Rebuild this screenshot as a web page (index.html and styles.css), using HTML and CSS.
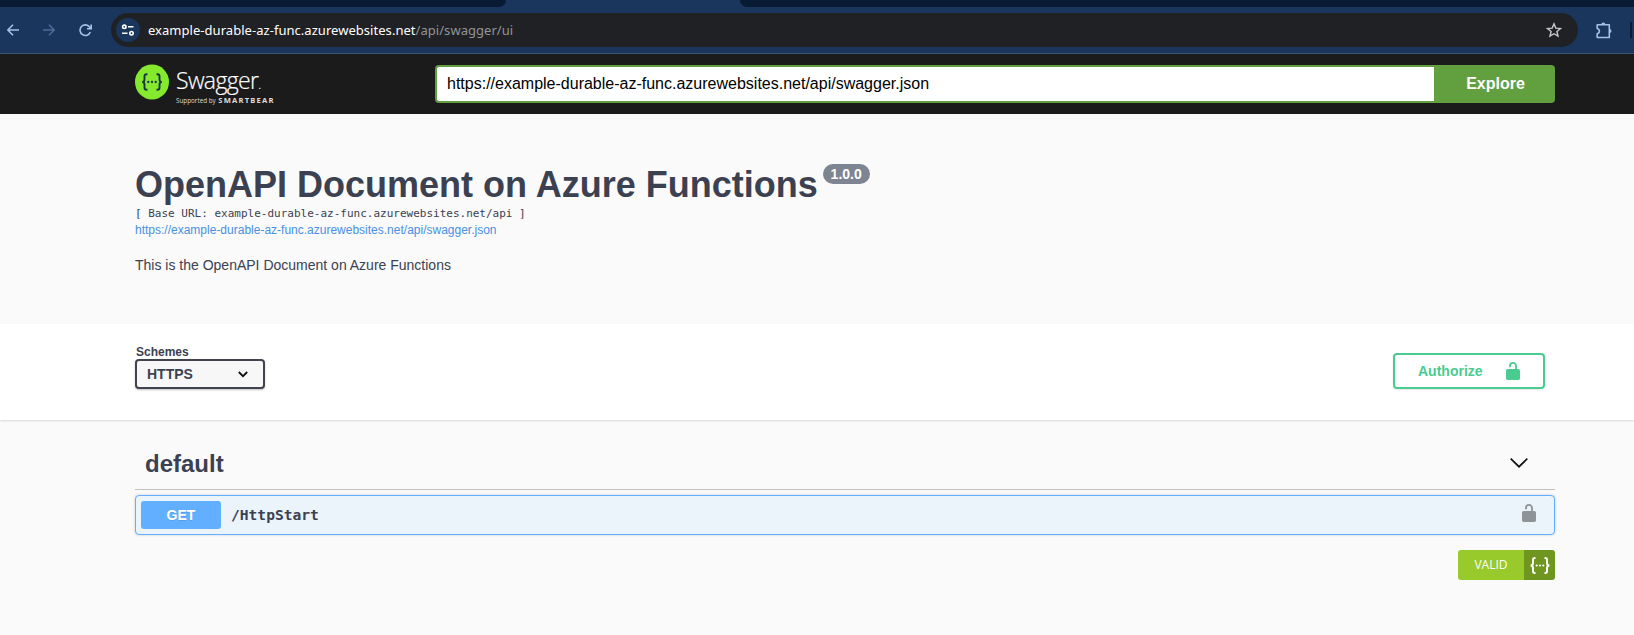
FILE: index.html
```html
<!DOCTYPE html>
<html lang="en">
<head>
<meta charset="utf-8">
<title>Swagger UI</title>
<link rel="stylesheet" href="styles.css">
</head>
<body>
<div class="tabs"><div class="tab-left"></div><div class="tab-active"></div><div class="tab-right"></div></div>
<div class="toolbar">
  <div class="nav">
    <svg width="12" height="12" viewBox="0 0 12 12" class="ico"><path d="M12 6H1M6 .7L.8 6 6 11.300"/></svg>
    <svg width="12" height="12" viewBox="0 0 12 12" class="ico dim"><path d="M0 6h11M6 .7L11.200 6 6 11.300"/></svg>
    <svg width="13" height="13" viewBox="0 0 13 13" class="ico"><path d="M11.300 8A5.300 5.300 0 1 1 10.600 3L12 4.600M12.200 .5v4.300H8"/></svg>
  </div>
  <div class="omnibox">
    <span class="site"><svg width="14" height="14" viewBox="0 0 14 14"><g fill="none" stroke="#fff" stroke-width="1.600"><circle cx="3.300" cy="3.800" r="1.700"/><path d="M7 3.800h5.500M1 10.200h5.500"/><circle cx="10.500" cy="10.200" r="1.700"/></g></svg></span>
    <span class="address">example-durable-az-func.azurewebsites.net<span class="path">/api/swagger/ui</span></span>
    <svg class="star" width="16" height="16" viewBox="0 0 16 16"><path d="M8 1.800l1.800 4.300 4.700.4-3.600 3 1.100 4.600L8 11.700l-4 2.400 1.100-4.600-3.600-3 4.700-.4z" fill="none" stroke="#c7c7c7" stroke-width="1.400"/></svg>
  </div>
  <svg class="puzzle" width="18" height="17" viewBox="0 0 18 17"><path d="M2.200 2.700H14.300V15.500H2.200V11.800Q4.400 11.200 4.400 9.100T2.200 6.400Z" fill="none" stroke="#a8bfe4" stroke-width="1.600" stroke-linejoin="round"/><path d="M6.300 2.500a2 2 0 0 1 4 0zM14.500 7a2 2 0 0 1 0 4z" fill="#a8bfe4"/></svg>
  <div class="divider"></div>
</div>
<header class="topbar">
  <div class="logo">
    <svg width="34" height="36" viewBox="0 0 34 36"><ellipse cx="17" cy="18" rx="17" ry="17.500" fill="#85ea2d"/><g fill="none" stroke="#173647" stroke-width="1.900"><path d="M12.500 10.200h-1q-2 0-2 2v3.200q0 2.400-2.200 2.600 2.200.2 2.200 2.600v3.200q0 2 2 2h1M21.500 10.200h1q2 0 2 2v3.200q0 2.400 2.200 2.600-2.200.2-2.200 2.600v3.200q0 2-2 2h-1"/></g><g fill="#173647"><circle cx="13.300" cy="18" r="1.150"/><circle cx="17" cy="18" r="1.150"/><circle cx="20.700" cy="18" r="1.150"/></g></svg>
    <div class="wordmark"><div class="name">Swagger<span class="tm">.</span></div><div class="support">Supported by <b>SMARTBEAR</b></div></div>
  </div>
  <div class="search"><div class="url">https://example-durable-az-func.azurewebsites.net/api/swagger.json</div><div class="explore">Explore</div></div>
</header>
<section class="info">
  <div class="heading"><h1>OpenAPI Document on Azure Functions</h1><span class="version">1.0.0</span></div>
  <div class="base">[ Base URL: example-durable-az-func.azurewebsites.net/api ]</div>
  <a class="link">https://example-durable-az-func.azurewebsites.net/api/swagger.json</a>
  <p class="desc">This is the OpenAPI Document on Azure Functions</p>
</section>
<section class="schemes">
  <div><div class="label">Schemes</div>
    <div class="select"><span>HTTPS</span><svg width="10" height="7" viewBox="0 0 10 7"><path d="M.8 1L5 5.200 9.200 1" fill="none" stroke="#111" stroke-width="1.800"/></svg></div></div>
  <div class="authorize"><span>Authorize</span><svg width="14" height="18" viewBox="0 0 14 18"><path d="M10 8V3.900a3 3 0 0 0-6 0v1.300" fill="none" stroke="#49cc90" stroke-width="1.800"/><rect y="7" width="14" height="11" rx="1.800" fill="#49cc90"/></svg></div>
</section>
<main class="operations">
  <div class="tag"><h2>default</h2><svg width="18" height="10" viewBox="0 0 18 10"><path d="M.7.700L9 8.700 17.300.700" fill="none" stroke="#111" stroke-width="1.700"/></svg></div>
  <div class="op"><span class="method">GET</span><span class="route">/HttpStart</span><svg width="14" height="18" viewBox="0 0 14 18"><path d="M10 8V3.900a3 3 0 0 0-6 0v1.300" fill="none" stroke="#8e9397" stroke-width="1.800"/><rect y="7" width="14" height="11" rx="1.800" fill="#8e9397"/></svg></div>
  <div class="badge"><span class="valid">VALID</span><span class="braces"><svg width="20" height="17" viewBox="0 0 20 17"><g fill="none" stroke="#fff" stroke-width="1.900"><path d="M5.500 1h-.8q-1.700 0-1.700 1.700v3.300q0 2.300-2.300 2.500 2.300.2 2.300 2.500v3.300Q3 16 4.700 16h.8M14.500 1h.8q1.700 0 1.700 1.700v3.300q0 2.300 2.300 2.500-2.300.2-2.300 2.500v3.300q0 1.700-1.700 1.700h-.8"/></g><g fill="#fff"><circle cx="6.700" cy="8.500" r="1.100"/><circle cx="10" cy="8.500" r="1.100"/><circle cx="13.300" cy="8.500" r="1.100"/></g></svg></span></div>
</main>
</body>
</html>
```
FILE: styles.css
```css
* { box-sizing: border-box; }
body { margin: 0; height: 635px; overflow: hidden; background: #fafafa; color: #3b4151; font-family: "Liberation Sans", Arial, sans-serif; }
svg { display: block; flex: none; }
h1, h2, p { margin: 0; }

.tabs { display: flex; height: 7px; background: #1a365d; }
.tab-left { width: 506px; background: #091a35; border-bottom-right-radius: 8px; }
.tab-active { width: 234px; }
.tab-right { flex: 1; background: #091a35; border-bottom-left-radius: 8px; }

.toolbar { display: flex; align-items: center; height: 47px; background: #1a365d; border-bottom: 1px solid #3c5475; }
.nav { display: flex; align-items: center; width: 111px; padding-left: 7px; gap: 24px; }
.ico { fill: none; stroke: #a8c0e8; stroke-width: 1.6; }
.dim { stroke: #4f6b96; }
.omnibox { display: flex; align-items: center; width: 1467px; height: 34px; padding: 0 16px 0 5px; border-radius: 17px; background: #202124; }
.site { display: flex; align-items: center; justify-content: center; width: 24px; height: 24px; border-radius: 50%; background: #1a365d; }
.address { flex: 1; margin-left: 8px; font: 13px/20px "Noto Sans", sans-serif; letter-spacing: 0.04px; color: #fff; }
.path { color: #929498; }
.puzzle { margin-left: 17px; }
.divider { width: 2px; height: 16px; margin-left: 17px; background: #0a1c38; }

.topbar { display: flex; align-items: center; height: 60px; padding: 0 79px 0 135px; background: #1b1b1b; }
.logo { display: flex; width: 300px; height: 41px; color: #fff; }
.wordmark { padding-left: 7px; }
.name { height: 32px; font: 300 23px/33px "Open Sans", sans-serif; letter-spacing: -0.65px; -webkit-text-stroke: 0.2px #fff; }
.tm { font-size: 12px; }
.support { font: 6.3px/8px "Open Sans", sans-serif; white-space: nowrap; color: #ddd; }
.support b { margin-left: 1px; font-size: 7.6px; letter-spacing: 1.2px; }
.search { display: flex; flex: 1; height: 38px; }
.url { flex: 1; padding-left: 10px; border: 2px solid #62a03f; border-right: 0; border-radius: 4px 0 0 4px; background: #fff; font-size: 16px; line-height: 33px; color: #000; }
.explore { width: 121px; padding-left: 2px; border-radius: 0 4px 4px 0; background: #62a03f; color: #fff; font-size: 16px; font-weight: bold; line-height: 37px; text-align: center; }

.info { height: 210px; padding: 50px 79px 0 135px; }
.heading { display: flex; height: 43px; }
h1 { font-size: 36px; line-height: 41px; white-space: nowrap; }
.version { width: 47px; height: 20px; margin-left: 5px; border-radius: 10px; background: #7d8492; color: #fff; font-size: 14px; font-weight: bold; line-height: 20px; text-align: center; }
.base { font: 11px/14px "DejaVu Sans Mono", monospace; }
.link { display: block; font-size: 12px; line-height: 18px; color: #4990e2; }
.desc { margin-top: 18px; font-size: 14px; line-height: 16px; }

.schemes { display: flex; justify-content: space-between; height: 96px; padding: 21px 89px 0 135px; background: #fff; box-shadow: 0 1px 2px rgba(0,0,0,.15); }
.label { padding-left: 1px; height: 15px; font-size: 12px; font-weight: bold; line-height: 16px; }
.select { display: flex; align-items: center; justify-content: space-between; width: 130px; height: 30px; padding: 0 15px 0 10px; border: 2px solid #41444e; border-radius: 4px; background: #f7f7f7; box-shadow: 0 1px 2px rgba(0,0,0,.25); font-size: 14px; font-weight: bold; }
.authorize { display: flex; align-items: center; width: 152px; height: 36px; margin-top: 9px; padding: 0 23px; justify-content: space-between; border: 2px solid #49cc90; border-radius: 4px; box-shadow: 0 1px 2px rgba(0,0,0,.1); color: #49cc90; font-size: 14px; font-weight: bold; }
.select, .authorize, .label { translate: 0 -1px; }

.operations { padding: 19px 79px 0 135px; }
.tag { display: flex; align-items: center; justify-content: space-between; height: 51px; padding: 0 27px 0 10px; border-bottom: 1px solid #bfbfc0; }
.tag svg { margin-bottom: 3px; }
h2 { font-size: 24px; line-height: 30px; }
.op { display: flex; align-items: center; height: 40px; margin-top: 5px; padding: 0 18px 0 5px; border: 1px solid #61affe; border-radius: 4px; background: #ebf3fb; box-shadow: 0 0 3px rgba(0,0,0,.19); }
.op svg { margin-bottom: 5px; }
.method { width: 80px; height: 28px; border-radius: 3px; background: #61affe; color: #fff; font-size: 14px; font-weight: bold; line-height: 28px; text-align: center; text-shadow: 0 1px 0 rgba(0,0,0,.1); }
.route { flex: 1; padding-left: 10px; font: bold 14.6px/20px "DejaVu Sans Mono", monospace; }
.badge { display: flex; width: 97px; height: 30px; margin: 15px 0 0 auto; overflow: hidden; border-radius: 3px; }
.valid { width: 66px; background: #97ca2a; color: #fff; font: 500 12px/30px "Open Sans", sans-serif; text-align: center; }
.braces { display: flex; align-items: center; justify-content: center; width: 31px; background: #6f971f; }
```
